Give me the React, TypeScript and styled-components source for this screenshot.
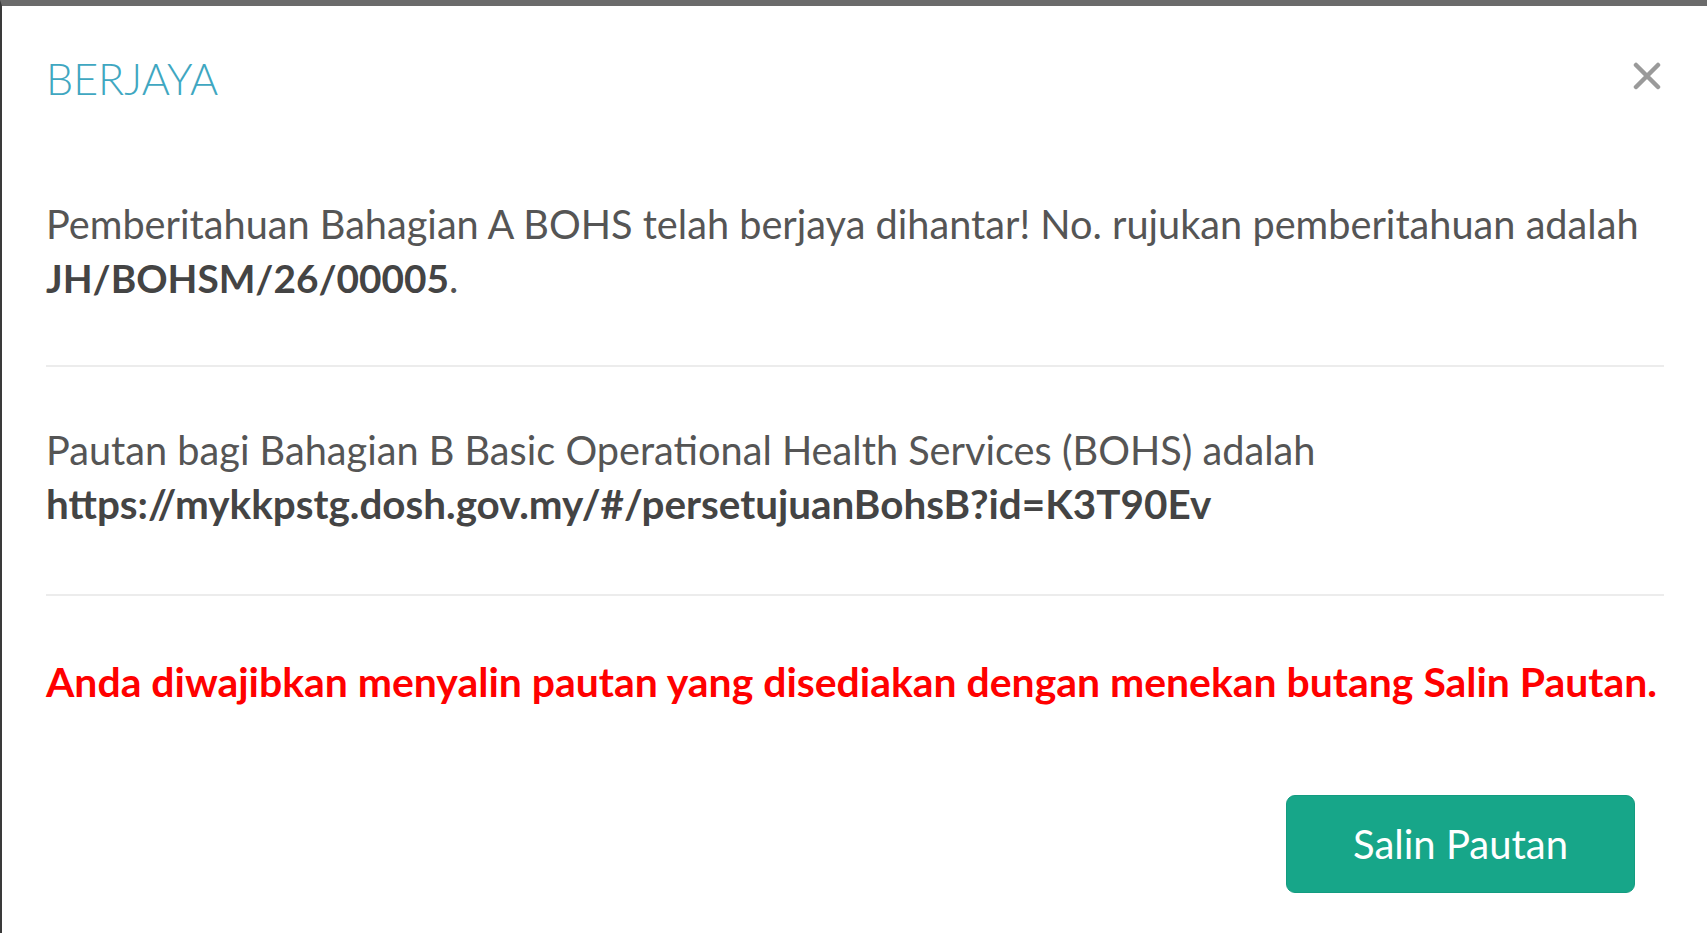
import React from "react";
import styled, { createGlobalStyle } from "styled-components";

const GlobalStyle = createGlobalStyle`
  html, body {
    margin: 0;
    padding: 0;
    background: #6b6b6b;
    overflow: hidden;
  }
  body {
    font-family: Lato, "Open Sans", "Liberation Sans", sans-serif;
  }
`;

const Page = styled.div`
  min-height: 100vh;
  box-sizing: border-box;
  border-top: 6px solid #6b6b6b;
  border-left: 2px solid #3a3a3a;
  background: #ffffff;
`;

const Modal = styled.div`
  display: flex;
  flex-direction: column;
  padding: 0 43px 0 44px;
`;

const Header = styled.div`
  display: flex;
  justify-content: space-between;
  align-items: flex-start;
  padding-top: 47px;
`;

const Title = styled.h4`
  margin: 0;
  font-size: 43px;
  line-height: 51px;
  font-weight: 300;
  color: #3fa7c1;
`;

const CloseButton = styled.button`
  display: flex;
  padding: 0;
  margin: 9px 3px 0 0;
  border: 0;
  background: transparent;
  cursor: pointer;
`;

const Body = styled.div`
  display: flex;
  flex-direction: column;
  padding-top: 93px;
`;

const Text = styled.p<{ $alert?: boolean }>`
  margin: 0;
  font-size: ${(p) => (p.$alert ? "40.9px" : "39.7px")};
  line-height: 54px;
  color: ${(p) => (p.$alert ? "#ff0000" : "#555555")};
  font-weight: ${(p) => (p.$alert ? 700 : 400)};
  white-space: nowrap;
`;

const Strong = styled.strong<{ $size: number }>`
  font-weight: 700;
  font-size: ${(p) => p.$size}px;
  color: #444444;
`;

const Divider = styled.hr<{ $top: number; $bottom: number }>`
  margin: ${(p) => p.$top}px 0 ${(p) => p.$bottom}px;
  border: 0;
  height: 2px;
  background: #ececec;
`;

const Footer = styled.div`
  display: flex;
  justify-content: flex-end;
  padding: 86px 29px 0 0;
`;

const PrimaryButton = styled.button`
  width: 349px;
  height: 98px;
  border: 1px solid #139c80;
  border-radius: 9px;
  background: #17a689;
  color: #ffffff;
  font-family: inherit;
  font-size: 40px;
  cursor: pointer;
`;

const CloseIcon = () => (
  <svg width="28" height="28" viewBox="0 0 28 28">
    <path
      d="M3 3 L25 25 M25 3 L3 25"
      stroke="#9a9a9a"
      strokeWidth="4.5"
      strokeLinecap="round"
    />
  </svg>
);

export default function App() {
  return (
    <>
      <GlobalStyle />
      <Page>
        <Modal>
          <Header>
            <Title>BERJAYA</Title>
            <CloseButton aria-label="Tutup">
              <CloseIcon />
            </CloseButton>
          </Header>
          <Body>
            <Text>
              Pemberitahuan Bahagian A BOHS telah berjaya dihantar! No. rujukan
              pemberitahuan adalah
              <br />
              <Strong $size={38.8}>JH/BOHSM/26/00005</Strong>.
            </Text>
            <Divider $top={60} $bottom={56} />
            <Text>
              Pautan bagi Bahagian B Basic Operational Health Services (BOHS)
              adalah
              <br />
              <Strong $size={40.4}>
                https://mykkpstg.dosh.gov.my/#/persetujuanBohsB?id=K3T90Ev
              </Strong>
            </Text>
            <Divider $top={63} $bottom={59} />
            <Text $alert>
              Anda diwajibkan menyalin pautan yang disediakan dengan menekan
              butang Salin Pautan.
            </Text>
          </Body>
          <Footer>
            <PrimaryButton>Salin Pautan</PrimaryButton>
          </Footer>
        </Modal>
      </Page>
    </>
  );
}
